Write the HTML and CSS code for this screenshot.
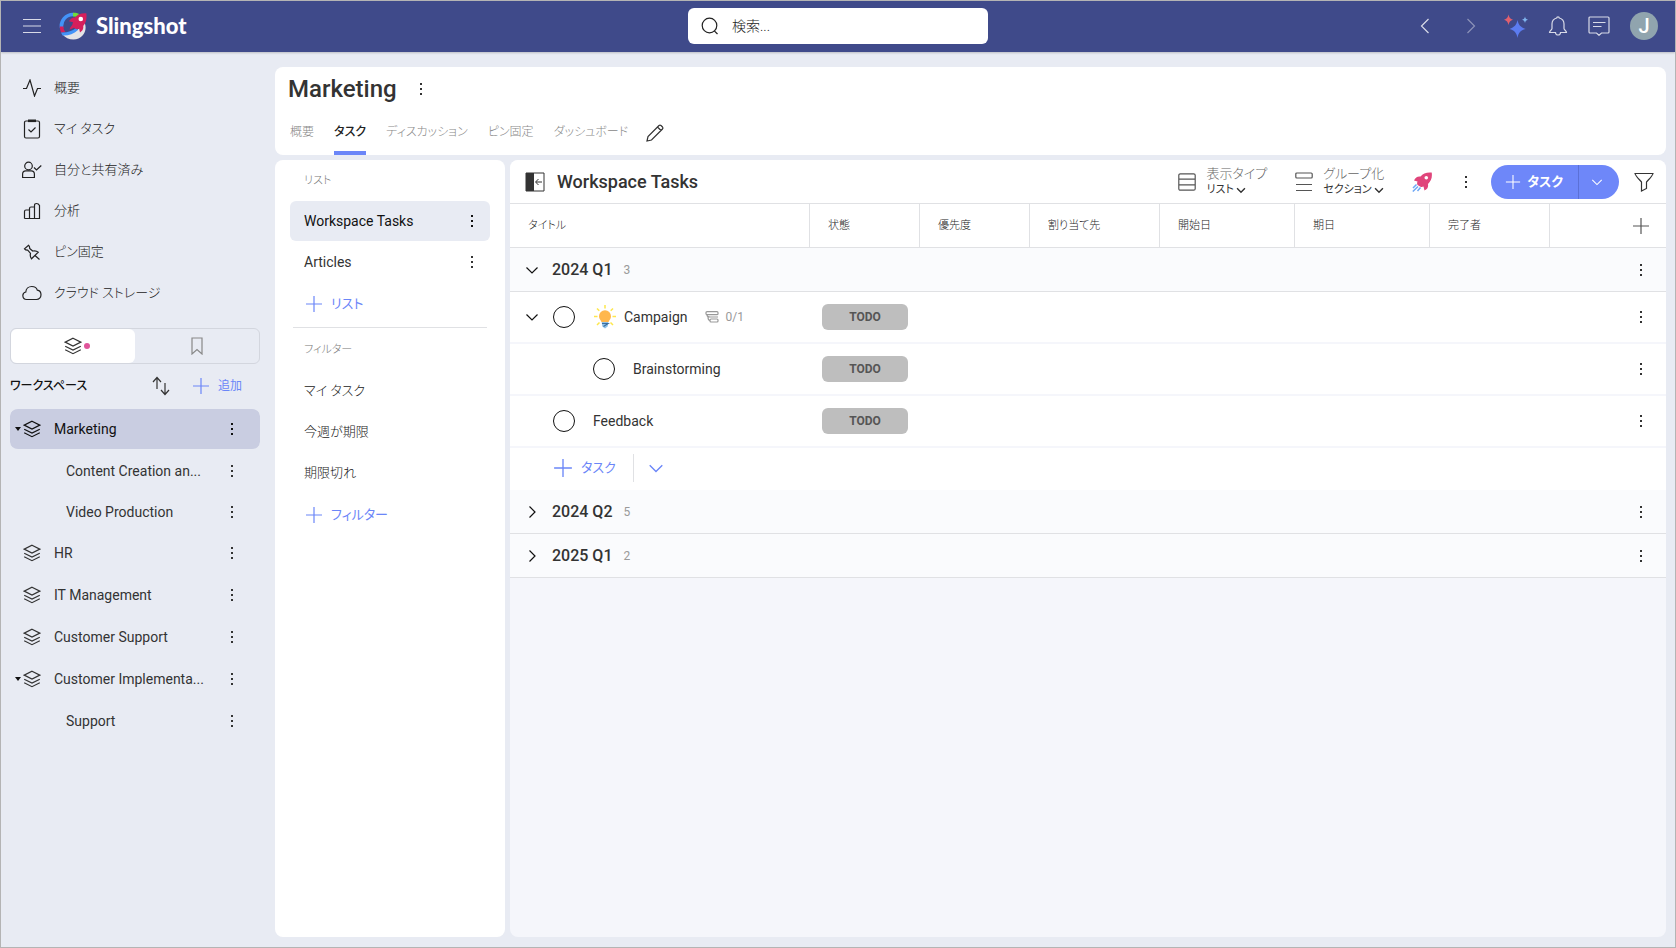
FILE: index.html
```html
<!DOCTYPE html>
<html lang="ja">
    <head>
        <meta charset="utf-8">
        <title>Slingshot</title>
        <link rel="stylesheet" href="styles.css">
    </head>
    <body>
        <svg class="sprite" aria-hidden="true">
            <symbol id="dots" viewBox="0 0 4 14"><path d="M1 1h2v2H1zM1 6h2v2H1zM1 11h2v2H1z" fill="currentColor"/></symbol>
            <symbol id="plus" viewBox="0 0 18 18"><path d="M9 1v16M1 9h16"/></symbol>
            <symbol id="down" viewBox="0 0 14 14"><path d="M1.500 4.500l5.500 5.500 5.500-5.500"/></symbol>
            <symbol id="right" viewBox="0 0 14 14"><path d="M4.500 1.500L10 7l-5.500 5.500"/></symbol>
            <symbol id="layers" viewBox="0 0 18 18"><path d="M9 1.200l7.800 3.900L9 9 1.200 5.100zM1.200 9.200L9 13l7.800-3.800M1.200 12.800L9 16.700l7.800-3.900"/></symbol>
        </svg>

        <header class="topbar">
            <div class="brand">
                <button class="icon-btn" aria-label="メニュー">
                    <svg class="icon" width="18" height="16" viewBox="0 0 18 16"><path d="M0 1.500h18M0 8h18M0 14.500h18"/></svg>
                </button>
                <a class="logo" href="#">
                    <svg width="28" height="28" viewBox="0 0 28 28">
                        <path d="M3.500 22.500C11 23 20 19 25.500 10.500 29 18 24 27.500 14.500 27.500c-4.500 0-8.500-2-11-5z" fill="#e3e3e6"/>
                        <path d="M2.600 16A11.600 11.600 0 0 1 14.500 2.500" fill="none" stroke="#4393f8" stroke-width="3.600"/>
                        <path d="M.8 14.500c.1 2.500.6 4.500 1.600 6.300l4-.8c-1.300-1.600-1.900-3.300-2-5.500z" fill="#d61f5c"/>
                        <path d="M14 .7c2.500-.1 4.300.3 6.200 1.200L17.500 4.800 14 4.400z" fill="#6fdc3c"/>
                        <path d="M2 20.500c6.500.3 11-1.300 15-4.500l2 2c-4.500 4-9.500 5.800-15.500 5.500z" fill="#4393f8"/>
                        <path d="M27.300 1.200c-5-.4-8.800 1-11.300 4.300-2.500-.2-4.600 1.200-6 3.800l4 1-.8 2.700c-1 1.200-2.200 2.700-2.700 4.500 1.700-.4 3-.9 4.300-1.800l2.700 1.500 2.600-.8.900 4c2.500-1.500 3.700-3.500 3.200-6.300 2.800-3.200 3.900-7.500 3.100-12.900z" fill="#d61f5c"/>
                        <circle cx="21.800" cy="7" r="2.300" fill="#fff"/>
                    </svg>
                    <span>Slingshot</span>
                </a>
            </div>
            <label class="search">
                <svg class="icon" width="18" height="18" viewBox="0 0 18 18"><circle cx="8.500" cy="8.500" r="7.300"/><path d="M13.300 13.800l3.200 3.200"/></svg>
                <input type="text" placeholder="検索..." aria-label="検索">
            </label>
            <div class="tools">
                <button class="icon-btn" aria-label="戻る"><svg class="icon" width="10" height="16" viewBox="0 0 10 16"><path d="M8.500 1l-7 7 7 7"/></svg></button>
                <button class="icon-btn dim" aria-label="進む"><svg class="icon" width="10" height="16" viewBox="0 0 10 16"><path d="M1.500 1l7 7-7 7"/></svg></button>
                <div class="tool-group">
                    <button class="icon-btn" aria-label="AI">
                        <svg width="24" height="24" viewBox="0 0 24 24">
                            <path d="M13.500 6c1 5 3 7 8 9-5 1.500-7 3.500-8 9-1-5.500-3-7.500-8-9 5-2 7-4 8-9z" fill="#5c7cf0"/>
                            <path d="M4.500.5c.6 3 1.800 4.500 4.500 5.300C6.300 6.600 5.100 8 4.500 11 3.900 8 2.700 6.600 0 5.800 2.700 5 3.900 3.500 4.500.5z" fill="#e2606e"/>
                            <path d="M21 2.500c.4 2 1.200 2.800 3 3.300-1.800.5-2.600 1.300-3 3.200-.4-1.900-1.200-2.700-3-3.200 1.800-.5 2.600-1.300 3-3.300z" fill="#7fb4ee"/>
                        </svg>
                    </button>
                    <button class="icon-btn" aria-label="通知"><svg class="icon" width="20" height="20" viewBox="0 0 20 20"><path d="M10 .8c.9 0 1.300.5 1.300 1.200 3 .8 4.700 3 4.700 6v4.500c0 1.500 2.500 2 2.500 4H12.500a2.500 2.500 0 0 1-5 0H1.500c0-2 2.500-2.500 2.500-4V8c0-3 1.700-5.200 4.700-6 0-.7.400-1.200 1.300-1.200z"/></svg></button>
                    <button class="icon-btn" aria-label="チャット"><svg class="icon" width="22" height="20" viewBox="0 0 22 20"><path d="M2 1h18a1 1 0 0 1 1 1v14a1 1 0 0 1-1 1h-6.500L11 19.300 8.500 17H2a1 1 0 0 1-1-1V2a1 1 0 0 1 1-1zM5 6.500h12.500M5 10.500h8.500"/></svg></button>
                    <button class="avatar">J</button>
                </div>
            </div>
        </header>

        <div class="shell">
            <aside class="sidebar">
                <nav class="main-nav">
                    <a href="#"><svg class="icon" width="18" height="18" viewBox="0 0 18 18"><path d="M0 9.500h3.500L7 1l4.500 16 3-7.500H18"/></svg>概要</a>
                    <a href="#"><svg class="icon" width="18" height="20" viewBox="0 0 18 20"><rect x="1.500" y="2" width="15" height="17" rx="1.500"/><path d="M5.500 10.500l2.500 2.500 4.500-4.500"/><path d="M5 1.800h8" stroke-width="2.600"/></svg>マイ タスク</a>
                    <a href="#"><svg class="icon" width="20" height="18" viewBox="0 0 20 18"><circle cx="6.500" cy="5" r="3.800"/><path d="M.6 16.500V13c0-2 1.400-3.200 3.200-3.200h5.400c1.800 0 3.200 1.200 3.200 3.200v3.500zM12 6.500L14.500 9l4.800-4.500"/></svg>自分と共有済み</a>
                    <a href="#"><svg class="icon" width="18" height="18" viewBox="0 0 18 18"><path d="M1.500 16.500V9.500q0-1.500 1.500-1.500h3.500M6.500 16.500v-10Q6.500 5 8 5h3.500M11.500 16.500v-13Q11.500 1.500 13.500 1.500T16.500 3.500v13zH1.500"/></svg>分析</a>
                    <a href="#"><svg class="icon" width="18" height="18" viewBox="0 0 18 18"><path d="M5.500 2.200c1 .9 1.300 2 1.200 3.200l3 2.600c2.200-.5 4.200 0 5.500 1.200l-6.700 6.600c-1.200-1.400-1.500-3.300-1-5.500L4.700 7.200c-1.200.1-2.400-.3-3.200-1.300zM12 12.500l4.500 4"/></svg>ピン固定</a>
                    <a href="#"><svg class="icon" width="20" height="16" viewBox="0 0 20 16"><path d="M4.500 14.500a3.800 3.800 0 0 1-.7-7.500c.2-3.500 2.900-5.500 6-5.500 2.600 0 4.800 1.300 5.500 3.700 2.300.3 3.700 2.200 3.700 4.600 0 2.700-1.900 4.700-4.500 4.700z"/></svg>クラウド ストレージ</a>
                </nav>

                <div class="switch">
                    <button class="on" aria-label="ワークスペース"><svg class="icon" width="18" height="18"><use href="#layers"/></svg><i class="dot"></i></button>
                    <button aria-label="ブックマーク"><svg class="icon" width="12" height="18" viewBox="0 0 12 18"><path d="M1 1h10v16l-5-4.500L1 17z"/></svg></button>
                </div>

                <div class="ws-head">
                    <h2>ワークスペース</h2>
                    <button class="icon-btn" aria-label="並べ替え"><svg class="icon" width="18" height="20" viewBox="0 0 18 20"><path d="M5 13V2M1 6l4-4.500L9 6M13 7v11M9 14l4 4.500 4-4.500"/></svg></button>
                    <button class="add"><svg class="icon" width="18" height="18"><use href="#plus"/></svg>追加</button>
                </div>

                <ul class="ws-list">
                    <li class="parent open selected"><a href="#"><svg class="icon" width="18" height="18"><use href="#layers"/></svg>Marketing</a><button class="more" aria-label="その他"><svg width="4" height="14"><use href="#dots"/></svg></button></li>
                    <li class="child"><a href="#">Content Creation an...</a><button class="more" aria-label="その他"><svg width="4" height="14"><use href="#dots"/></svg></button></li>
                    <li class="child"><a href="#">Video Production</a><button class="more" aria-label="その他"><svg width="4" height="14"><use href="#dots"/></svg></button></li>
                    <li class="parent"><a href="#"><svg class="icon" width="18" height="18"><use href="#layers"/></svg>HR</a><button class="more" aria-label="その他"><svg width="4" height="14"><use href="#dots"/></svg></button></li>
                    <li class="parent"><a href="#"><svg class="icon" width="18" height="18"><use href="#layers"/></svg>IT Management</a><button class="more" aria-label="その他"><svg width="4" height="14"><use href="#dots"/></svg></button></li>
                    <li class="parent"><a href="#"><svg class="icon" width="18" height="18"><use href="#layers"/></svg>Customer Support</a><button class="more" aria-label="その他"><svg width="4" height="14"><use href="#dots"/></svg></button></li>
                    <li class="parent open"><a href="#"><svg class="icon" width="18" height="18"><use href="#layers"/></svg>Customer Implementa...</a><button class="more" aria-label="その他"><svg width="4" height="14"><use href="#dots"/></svg></button></li>
                    <li class="child"><a href="#">Support</a><button class="more" aria-label="その他"><svg width="4" height="14"><use href="#dots"/></svg></button></li>
                </ul>
            </aside>

            <main class="content">
                <section class="page-head">
                    <div class="page-title">
                        <h1>Marketing</h1>
                        <button class="more" aria-label="その他"><svg width="4" height="14"><use href="#dots"/></svg></button>
                    </div>
                    <nav class="tabs">
                        <a href="#">概要</a>
                        <a href="#" class="active">タスク</a>
                        <a href="#">ディスカッション</a>
                        <a href="#">ピン固定</a>
                        <a href="#">ダッシュボード</a>
                        <button class="icon-btn" aria-label="編集"><svg class="icon" width="18" height="18" viewBox="0 0 18 18"><path d="M1 17l1-4.500L13 1.500q1-.8 2 0l1.500 1.500q.8 1 0 2L5.500 16zM11.500 3l3.500 3.500"/></svg></button>
                    </nav>
                </section>

                <div class="panels">
                    <section class="lists">
                        <h3>リスト</h3>
                        <ul>
                            <li class="selected"><a href="#">Workspace Tasks</a><button class="more" aria-label="その他"><svg width="4" height="14"><use href="#dots"/></svg></button></li>
                            <li><a href="#">Articles</a><button class="more" aria-label="その他"><svg width="4" height="14"><use href="#dots"/></svg></button></li>
                        </ul>
                        <button class="add"><svg class="icon" width="18" height="18"><use href="#plus"/></svg>リスト</button>
                        <hr>
                        <h3>フィルター</h3>
                        <ul class="filters">
                            <li><a href="#">マイ タスク</a></li>
                            <li><a href="#">今週が期限</a></li>
                            <li><a href="#">期限切れ</a></li>
                        </ul>
                        <button class="add"><svg class="icon" width="18" height="18"><use href="#plus"/></svg>フィルター</button>
                    </section>

                    <section class="tasks">
                        <div class="toolbar">
                            <button class="icon-btn" aria-label="リストを隠す"><svg width="20" height="20" viewBox="0 0 20 20"><path d="M1 1h18v18H1z" fill="none" stroke="#333"/><path d="M1 1h8v18H1z" fill="#333"/><path d="M17 10h-6M13.500 7l-3 3 3 3" fill="none" stroke="#333"/></svg></button>
                            <h2>Workspace Tasks</h2>
                            <div class="option">
                                <svg class="icon" width="18" height="18" viewBox="0 0 18 18"><rect x=".8" y=".8" width="16.400" height="16.400" rx="1.500"/><path d="M1 6.200h16M1 11.800h16"/></svg>
                                <div>
                                    <label for="view">表示タイプ</label>
                                    <div class="pick"><select id="view"><option>リスト</option></select><svg class="icon" width="10" height="10" viewBox="0 0 14 14"><path d="M1.500 4.500L7 10l5.500-5.500" stroke-width="2"/></svg></div>
                                </div>
                            </div>
                            <div class="option">
                                <svg class="icon" width="18" height="20" viewBox="0 0 18 20"><rect x=".8" y="1" width="16.400" height="5" rx="1"/><path d="M1 12.500h16M1 18.500h16"/></svg>
                                <div>
                                    <label for="group">グループ化</label>
                                    <div class="pick"><select id="group"><option>セクション</option></select><svg class="icon" width="10" height="10" viewBox="0 0 14 14"><path d="M1.500 4.500L7 10l5.500-5.500" stroke-width="2"/></svg></div>
                                </div>
                            </div>
                            <button class="icon-btn rocket" aria-label="自動化">
                                <svg width="20" height="20" viewBox="0 0 20 20">
                                    <path d="M19.700.5C14.500 0 11 1.500 8.500 4.500 5.500 4 3.500 5.500 2 8.500l3.500 1c-.5 1.200-.6 2.300 0 3.500l3 1.800c1 .5 2 .3 3-.2l1 4c3-1.500 4-3.500 3.500-6.500 3-3 4.500-6.500 3.700-11.600z" fill="#e0457b"/>
                                    <circle cx="14.300" cy="5.800" r="1.800" fill="#fff"/>
                                    <path d="M4.500 12.500L1 16M6 14.500L.8 19.500M8.500 15.500L5.500 19" stroke="#6fa8f5" stroke-width="1.500"/>
                                </svg>
                            </button>
                            <button class="more" aria-label="その他"><svg width="4" height="14"><use href="#dots"/></svg></button>
                            <div class="new-task">
                                <button><svg class="icon" width="16" height="16"><use href="#plus"/></svg>タスク</button>
                                <button aria-label="テンプレート"><svg class="icon" width="12" height="12"><use href="#down"/></svg></button>
                            </div>
                            <button class="icon-btn" aria-label="フィルター"><svg class="icon" width="20" height="20" viewBox="0 0 20 20"><path d="M1 1.500h18c-.3 2-1.500 3-6.500 8.500v6.500l-5 2.500v-9C2.500 4.500 1.300 3.500 1 1.500z"/></svg></button>
                        </div>

                        <table>
                            <colgroup>
                                <col class="c-title"><col class="c-state"><col class="c-state"><col class="c-owner"><col class="c-date"><col class="c-date"><col class="c-done"><col>
                            </colgroup>
                            <thead>
                                <tr>
                                    <th>タイトル</th><th>状態</th><th>優先度</th><th>割り当て先</th><th>開始日</th><th>期日</th><th>完了者</th>
                                    <th class="end"><button class="icon-btn" aria-label="列を追加"><svg class="icon" width="18" height="18"><use href="#plus"/></svg></button></th>
                                </tr>
                            </thead>
                            <tbody>
                                <tr class="group">
                                    <td colspan="7"><div class="cell"><button class="toggle" aria-label="閉じる"><svg class="icon" width="14" height="14"><use href="#down"/></svg></button><b>2024 Q1</b><small>3</small></div></td>
                                    <td class="end"><button class="more" aria-label="その他"><svg width="4" height="14"><use href="#dots"/></svg></button></td>
                                </tr>
                                <tr class="task">
                                    <td>
                                        <div class="cell">
                                            <button class="toggle" aria-label="閉じる"><svg class="icon" width="14" height="14"><use href="#down"/></svg></button>
                                            <input type="checkbox" id="t1">
                                            <svg class="bulb" width="24" height="24" viewBox="0 0 24 24">
                                                <path d="M12 0v3.500M1 11.500h3.500M19.500 11.500H23M4 3.500l2.300 2.300M20 3.500l-2.300 2.300M4 20l2.500-2.500M20 20l-2.500-2.500" stroke="#fde74c" stroke-width="1.500"/>
                                                <path d="M12 5.200a6 6 0 0 1 6 6c0 2.500-1.500 3.600-2.500 5.800h-7C7.500 14.800 6 13.700 6 11.200a6 6 0 0 1 6-6z" fill="#ffb74d"/>
                                                <path d="M8.700 17h6.600l-.6 4.500L12 23.500l-2.700-2z" fill="#8fc1e8"/><path d="M9 18.500h6l-4.500 3" fill="none" stroke="#3c6e9f" stroke-width="1.200"/>
                                            </svg>
                                            <label for="t1">Campaign</label>
                                            <span class="subs"><svg class="icon" width="14" height="12" viewBox="0 0 14 12"><rect x="1" y=".7" width="12" height="3" rx="1"/><rect x="5" y="8" width="8" height="3" rx="1"/><path d="M2 4c0 1.500 1 2 3 2h8M3 6c0 2 .5 3.500 2 3.500"/></svg>0/1</span>
                                        </div>
                                    </td>
                                    <td class="state"><button class="badge">TODO</button></td>
                                    <td></td><td></td><td></td><td></td><td></td>
                                    <td class="end"><button class="more" aria-label="その他"><svg width="4" height="14"><use href="#dots"/></svg></button></td>
                                </tr>
                                <tr class="task">
                                    <td><div class="cell sub"><input type="checkbox" id="t2"><label for="t2">Brainstorming</label></div></td>
                                    <td class="state"><button class="badge">TODO</button></td>
                                    <td></td><td></td><td></td><td></td><td></td>
                                    <td class="end"><button class="more" aria-label="その他"><svg width="4" height="14"><use href="#dots"/></svg></button></td>
                                </tr>
                                <tr class="task">
                                    <td><div class="cell leaf"><input type="checkbox" id="t3"><label for="t3">Feedback</label></div></td>
                                    <td class="state"><button class="badge">TODO</button></td>
                                    <td></td><td></td><td></td><td></td><td></td>
                                    <td class="end"><button class="more" aria-label="その他"><svg width="4" height="14"><use href="#dots"/></svg></button></td>
                                </tr>
                                <tr class="add-row">
                                    <td colspan="8"><div class="cell leaf"><button class="add"><svg class="icon" width="20" height="20"><use href="#plus"/></svg>タスク</button><button class="add split" aria-label="テンプレート"><svg class="icon" width="16" height="16"><use href="#down"/></svg></button></div></td>
                                </tr>
                                <tr class="group">
                                    <td colspan="7"><div class="cell"><button class="toggle" aria-label="開く"><svg class="icon" width="14" height="14"><use href="#right"/></svg></button><b>2024 Q2</b><small>5</small></div></td>
                                    <td class="end"><button class="more" aria-label="その他"><svg width="4" height="14"><use href="#dots"/></svg></button></td>
                                </tr>
                                <tr class="group">
                                    <td colspan="7"><div class="cell"><button class="toggle" aria-label="開く"><svg class="icon" width="14" height="14"><use href="#right"/></svg></button><b>2025 Q1</b><small>2</small></div></td>
                                    <td class="end"><button class="more" aria-label="その他"><svg width="4" height="14"><use href="#dots"/></svg></button></td>
                                </tr>
                            </tbody>
                        </table>
                    </section>
                </div>
            </main>
        </div>
    </body>
</html>
```
FILE: styles.css
```css
*{
    box-sizing: border-box;
    margin: 0;
    padding: 0;
}
body{
    display: flex;
    flex-direction: column;
    min-height: 100vh;
    border: 1px solid #b4b4b4;
    background-color: #e8ebf3;
    color: #333;
    font: 14px/20px Roboto, "Noto Sans CJK JP", sans-serif;
    font-feature-settings: "palt";
}
a{
    color: inherit;
    text-decoration: none;
}
ul{
    list-style: none;
}
button, input, select{
    border: none;
    background: none;
    color: inherit;
    font: inherit;
    font-feature-settings: inherit;
}
button{
    display: flex;
    align-items: center;
    justify-content: center;
    cursor: pointer;
}
svg{
    display: block;
    flex: none;
}
.sprite{
    position: absolute;
    width: 0;
    height: 0;
}
.icon{
    fill: none;
    stroke: currentColor;
    stroke-width: 1.2;
}
.more{
    width: 20px;
    height: 24px;
    flex: none;
}
.add{
    gap: 8px;
    color: #6b86f8;
    font-size: 13px;
}

/* top bar */
.topbar{
    display: grid;
    grid-template-columns: 1fr 300px 1fr;
    align-items: center;
    height: 51px;
    padding-bottom: 1px;
    background-color: #3f4a8a;
    color: #fff;
    box-shadow: 0 1px 2px rgba(0,0,0,.2);
}
.brand, .logo, .tools, .tool-group{
    display: flex;
    align-items: center;
}
.brand{
    gap: 18px;
    padding-left: 22px;
}
.logo{
    gap: 9px;
    font: 900 22px/28px Lato, sans-serif;
}
.brand .icon, .tools .icon{
    opacity: .8;
}
.search{
    display: flex;
    align-items: center;
    gap: 13px;
    height: 36px;
    padding: 0 13px;
    border-radius: 6px;
    background-color: #fff;
    color: #222;
}
.search input{
    flex: 1;
    min-width: 0;
    outline: none;
    font-weight: 300;
}
.search input::placeholder{
    color: #222;
}
.tools{
    justify-content: flex-end;
    gap: 36px;
    padding-right: 17px;
}
.tools .dim{
    opacity: .5;
}
.tool-group{
    gap: 20px;
    margin-left: -8px;
}
.avatar{
    width: 28px;
    height: 28px;
    border-radius: 50%;
    background-color: #90a4ae;
    font-size: 20px;
    font-weight: 500;
}

.shell{
    display: flex;
    flex: 1;
}

/* sidebar */
.sidebar{
    width: 274px;
    flex: none;
    padding: 15px 15px 0 9px;
}
.main-nav a{
    display: grid;
    grid-template-columns: 20px 1fr;
    align-items: center;
    gap: 12px;
    height: 41px;
    padding-left: 12px;
    color: #222;
    font-size: 13px;
    font-weight: 300;
}
.main-nav svg{
    justify-self: center;
}
.switch{
    display: flex;
    height: 36px;
    margin-top: 15px;
    border: 1px solid #d3d6de;
    border-radius: 6px;
}
.switch button{
    flex: 1;
    color: #888;
}
.switch .on{
    border-radius: 6px;
    background-color: #fff;
    color: #333;
}
.dot{
    width: 6px;
    height: 6px;
    margin: 0 -8px 0 2px;
    border-radius: 50%;
    background-color: #e0559b;
}
.ws-head{
    display: flex;
    align-items: center;
    height: 44px;
    padding-right: 18px;
}
.ws-head h2{
    flex: 1;
    color: #111;
    font-size: 12px;
    font-weight: 500;
}
.ws-head .add{
    margin-left: 22px;
    font-size: 12px;
}
.ws-list li{
    display: flex;
    align-items: center;
    height: 41px;
    padding-right: 18px;
}
.ws-list a{
    display: flex;
    flex: 1;
    align-items: center;
}
.ws-list .child a{
    padding-left: 56px;
}
.ws-list .parent{
    height: 42px;
    border: solid transparent;
    border-width: 1px 0;
    border-radius: 8px;
    background-clip: padding-box;
}
.ws-list .parent a::before{
    content: "";
    width: 0;
    margin: 0 2px 0 5px;
    border: 3px solid transparent;
    border-bottom-width: 0;
}
.ws-list .open a::before{
    border-top: 4px solid #111;
}
.ws-list .parent .icon{
    margin-right: 13px;
}
.ws-list .selected{
    background-color: #c9cde1;
    color: #111;
}

/* page header */
.content{
    display: flex;
    flex: 1;
    flex-direction: column;
    gap: 5px;
    min-width: 0;
    padding: 15px 9px 10px 0;
}
.page-head{
    height: 88px;
    padding: 0 13px;
    border-radius: 8px;
    background-color: #fff;
}
.page-title{
    display: flex;
    align-items: center;
    gap: 14px;
    height: 43px;
}
.page-title h1{
    font-size: 24px;
    font-weight: 500;
    line-height: 32px;
}
.tabs{
    display: flex;
    gap: 20px;
    height: 45px;
    padding-left: 2px;
    color: #888;
    font-size: 12px;
    font-weight: 300;
}
.tabs a{
    line-height: 45px;
}
.tabs .active{
    border-bottom: 4px solid #6b86f8;
    color: #222;
    font-weight: 500;
}
.tabs button{
    margin-left: -2px;
    color: #333;
}

.panels{
    display: flex;
    flex: 1;
    gap: 5px;
}

/* lists and filters */
.lists{
    width: 230px;
    flex: none;
    padding: 1px 15px 0;
    border-radius: 8px;
    background-color: #fff;
}
.lists h3{
    padding-left: 14px;
    color: #777;
    font-size: 11px;
    font-weight: 300;
    line-height: 40px;
}
.lists li{
    display: flex;
    align-items: center;
    height: 41px;
    padding: 0 8px 0 14px;
}
.lists a{
    flex: 1;
}
.lists .selected{
    height: 40px;
    border-radius: 6px;
    background-color: #e8ebf3;
    color: #111;
}
.filters{
    color: #222;
    font-size: 13px;
    font-weight: 300;
}
.lists .add{
    height: 44px;
    margin-left: 15px;
}
.lists hr{
    height: 1px;
    margin: 1px 3px 2px;
    border: none;
    background-color: #e0e1e4;
}

/* tasks */
.tasks{
    flex: 1;
    min-width: 0;
    overflow: hidden;
    border-radius: 8px;
    background-color: #f5f6fb;
}
.toolbar{
    display: flex;
    align-items: center;
    height: 44px;
    padding: 0 12px 0 15px;
    border-bottom: 1px solid #e0e1e4;
    background-color: #fff;
}
.toolbar h2{
    flex: 1;
    padding-left: 12px;
    font-size: 18px;
    font-weight: 500;
}
.option{
    display: flex;
    align-items: center;
    gap: 10px;
    margin-right: 28px;
    line-height: 16px;
}
.option > .icon{
    color: #555;
}
.option label{
    display: block;
    color: #666;
    font-size: 13px;
    font-weight: 300;
}
.pick{
    display: flex;
    align-items: center;
    gap: 2px;
    font-size: 11px;
}
.pick select{
    appearance: none;
    line-height: 16px;
}
.rocket{
    margin-right: 24px;
}
.new-task{
    display: flex;
    height: 34px;
    margin: 0 15px;
    overflow: hidden;
    border-radius: 17px;
    background-color: #6e87f9;
    color: #fff;
    font-size: 13px;
    font-weight: 700;
}
.new-task button{
    gap: 6px;
    padding: 0 15px 0 14px;
}
.new-task button + button{
    padding: 0 16px 0 12px;
    border-left: 1px solid #5b70d6;
}
table{
    width: 100%;
    border-spacing: 0;
    table-layout: fixed;
    background-color: #fff;
}
.c-title{
    width: 300px;
}
.c-state{
    width: 110px;
}
.c-owner{
    width: 130px;
}
.c-date{
    width: 135px;
}
.c-done{
    width: 120px;
}
th{
    height: 44px;
    padding-left: 18px;
    border-right: 1px solid #e0e1e4;
    border-bottom: 1px solid #e0e1e4;
    color: #222;
    font-size: 11px;
    font-weight: 300;
    text-align: left;
}
.end{
    padding-right: 15px;
    border-right: none;
}
th.end{
    padding-right: 16px;
}
.end button{
    margin-left: auto;
}
th .icon{
    color: #555;
}
.cell{
    display: flex;
    align-items: center;
    padding-left: 15px;
}
.toggle{
    width: 14px;
    margin-right: 14px;
    color: #111;
}
.group .toggle{
    margin-right: 13px;
}
.group td{
    height: 44px;
    border-bottom: 1px solid #e0e1e4;
    background-color: #fafbfd;
}
.group b{
    font-size: 16px;
    font-weight: 500;
}
.group small{
    margin-left: 11px;
    color: #999;
    font-size: 12px;
}
.task td{
    height: 52px;
    border-bottom: 2px solid #f5f6fb;
}
.task input{
    appearance: none;
    width: 22px;
    height: 22px;
    margin-right: 18px;
    border: 1px solid #111;
    border-radius: 50%;
}
.leaf{
    padding-left: 43px;
}
.sub{
    padding-left: 83px;
}
.bulb{
    margin-right: 7px;
}
.subs{
    display: flex;
    align-items: center;
    gap: 6px;
    margin-left: 18px;
    color: #999;
    font-size: 12px;
}
.task .state{
    padding: 0 12px;
}
.badge{
    width: 100%;
    height: 26px;
    border-radius: 6px;
    background-color: #bebebe;
    color: #555;
    font-size: 12px;
    font-weight: 700;
}
.add-row td{
    height: 42px;
    padding-bottom: 2px;
}
.add-row .split{
    height: 28px;
    margin-left: 17px;
    padding-left: 14px;
    border-left: 1px solid #e0e1e4;
}
```
